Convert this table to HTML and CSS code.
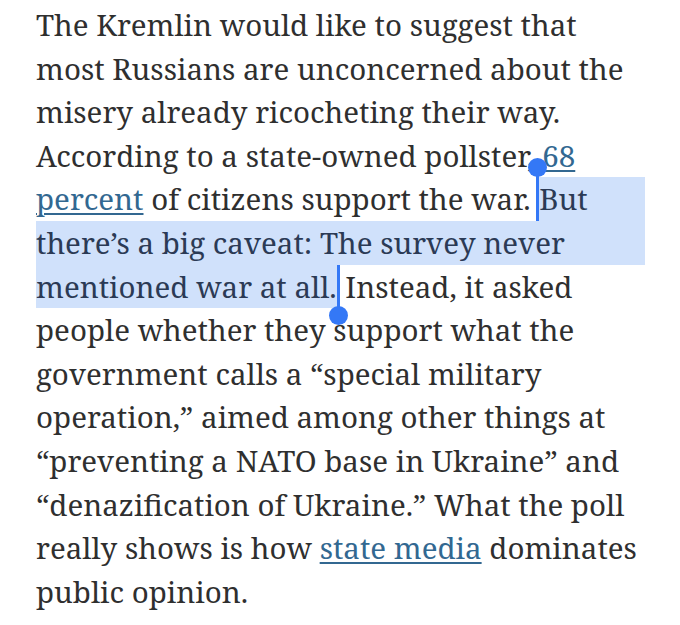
FILE: index.html
```html
<!DOCTYPE html>
<html lang="en">
<head>
<meta charset="utf-8">
<title>Article excerpt</title>
<link rel="stylesheet" href="styles.css">
</head>
<body>
<article class="story">
  <p class="paragraph">
    <span class="line">The Kremlin would like to suggest that</span>
    <span class="line">most Russians are unconcerned about the</span>
    <span class="line">misery already ricocheting their way.</span>
    <span class="line">According to a state-owned pollster, <a class="link" href="#">68</a></span>
    <span class="line line-split"><span><a class="link" href="#">percent</a> of citizens support the war.&nbsp;</span><span class="sel sel-fill">But<span class="handle handle-start" aria-hidden="true"></span></span></span>
    <span class="line sel">there’s a big caveat: The survey never</span>
    <span class="line"><span class="sel sel-end">mentioned war at all.<span class="handle handle-end" aria-hidden="true"></span></span> Instead, it asked</span>
    <span class="line">people whether they support what the</span>
    <span class="line">government calls a “special military</span>
    <span class="line">operation,” aimed among other things at</span>
    <span class="line">“preventing a NATO base in Ukraine” and</span>
    <span class="line">“denazification of Ukraine.” What the poll</span>
    <span class="line">really shows is how <a class="link" href="#">state media</a> dominates</span>
    <span class="line">public opinion.</span>
  </p>
</article>
</body>
</html>
```
FILE: styles.css
```css
html, body {
  margin: 0;
  padding: 0;
  background: #ffffff;
}

.story {
  width: 609px;
  margin: 0 0 0 36px;
  padding-top: 3px;
}

.paragraph {
  margin: 0;
  font-family: "Noto Serif", "DejaVu Serif", serif;
  font-size: 29.5px;
  line-height: 43.6px;
  color: #2f2f2f;
}

.line {
  display: block;
  height: 43.6px;
  white-space: nowrap;
}

.line-split {
  display: flex;
}

.sel {
  background: #d0e1fb;
  color: #2b3a55;
}

.sel-fill {
  position: relative;
  flex: 1;
  padding-left: 1px;
}

.sel-end {
  position: relative;
  display: inline-block;
  height: 43.6px;
  padding-right: 1px;
}

.link {
  color: #326891;
  text-decoration: underline;
  text-decoration-thickness: 1.5px;
  text-underline-offset: 3px;
}

.handle {
  position: absolute;
  width: 3px;
  background: #3478f6;
}

.handle::after {
  content: "";
  position: absolute;
  left: -8px;
  width: 19px;
  height: 19px;
  border-radius: 50%;
  background: #3478f6;
}

.handle-start {
  left: -2px;
  top: -10px;
  height: 54px;
}

.handle-start::after {
  top: -9.5px;
}

.handle-end {
  right: -2px;
  top: 0;
  height: 51px;
}

.handle-end::after {
  bottom: -9.5px;
}
```
